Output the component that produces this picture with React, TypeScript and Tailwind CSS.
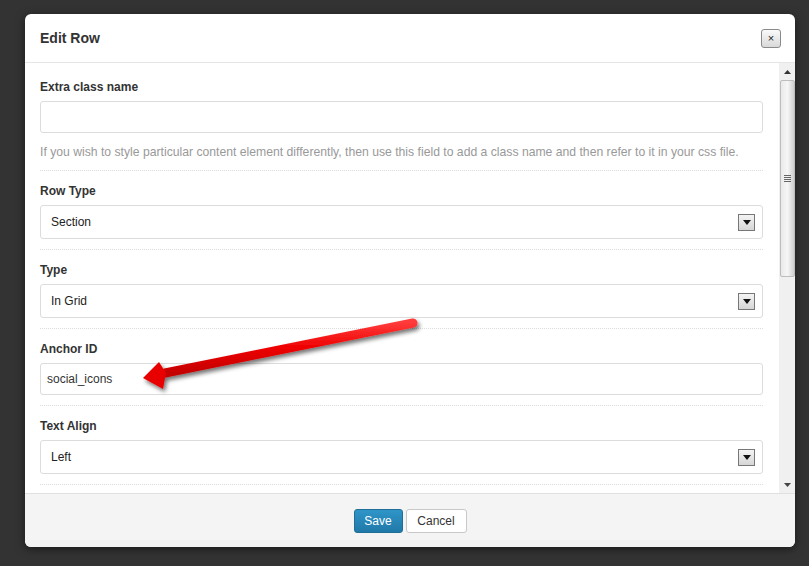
import React from "react";

const font = { fontFamily: '"Liberation Sans", Arial, sans-serif' };

const SelectBox = ({ value }: { value: string }) => (
  <div className="flex h-[34px] items-center justify-between rounded-[3px] border border-[#dcdcdc] bg-white pl-[10px] pr-[7px] text-[12px] text-[#222]">
    <span>{value}</span>
    <span className="flex h-[17px] w-[17px] items-center justify-center border border-[#777] bg-gradient-to-b from-[#f4f4f4] to-[#d6d6d6]">
      <svg width="8" height="5" viewBox="0 0 8 5">
        <path d="M0 0 H8 L4 5 Z" fill="#111" />
      </svg>
    </span>
  </div>
);

const TextBox = ({ value }: { value?: string }) => (
  <div className="flex h-[32px] items-center rounded-[3px] border border-[#dcdcdc] bg-white px-[6px] text-[12px] text-[#333]">
    {value}
  </div>
);

const Field = ({
  label,
  first,
  children,
}: {
  label: string;
  first?: boolean;
  children: React.ReactNode;
}) => (
  <div
    className={`border-b border-dotted border-[#dcdcdc] pb-[10px] ${first ? "pt-[16px]" : "pt-[12px]"}`}
  >
    <div className="mb-[6px] h-[16px] text-[12px] font-bold leading-[16px] text-[#333]">{label}</div>
    {children}
  </div>
);

export default function App() {
  return (
    <div className="relative h-[566px] w-[809px] overflow-hidden bg-[#333]" style={font}>
      <div className="pl-[25px] pt-[14px]">
        <div className="flex h-[533px] w-[770px] flex-col overflow-hidden rounded-[6px] bg-white shadow-[0_2px_10px_rgba(0,0,0,0.5)]">
          <div className="flex h-[49px] shrink-0 items-center justify-between border-b border-[#e5e5e5] pl-[15px] pr-[14px]">
            <h3 className="text-[14px] font-bold text-[#333]">Edit Row</h3>
            <button className="flex h-[19px] w-[20px] items-center justify-center rounded-[3px] border border-[#8a8a8a] bg-gradient-to-b from-[#fafafa] to-[#d9d9d9] text-[11px] leading-none text-[#222]">
              ×
            </button>
          </div>

          <div className="flex h-[430px] shrink-0">
            <div className="flex-1 pl-[15px] pr-[16px]">
              <Field label="Extra class name" first>
                <TextBox />
                <p className="mt-[11px] h-[16px] text-[12.2px] leading-[16px] text-[#999]">
                  If you wish to style particular content element differently, then use this field to add a class name and then refer to it in your css file.
                </p>
              </Field>
              <Field label="Row Type">
                <SelectBox value="Section" />
              </Field>
              <Field label="Type">
                <SelectBox value="In Grid" />
              </Field>
              <Field label="Anchor ID">
                <TextBox value="social_icons" />
              </Field>
              <Field label="Text Align">
                <SelectBox value="Left" />
              </Field>
            </div>
            <div className="flex w-[16px] flex-col items-center bg-[#f0f0f0]">
              <div className="flex h-[17px] w-full items-center justify-center">
                <svg width="7" height="4" viewBox="0 0 7 4">
                  <path d="M0 4 H7 L3.5 0 Z" fill="#333" />
                </svg>
              </div>
              <div className="flex h-[197px] w-[15px] items-center justify-center rounded-[2px] border border-[#bdbdbd] bg-gradient-to-r from-[#e9e9e9] via-[#f6f6f6] to-[#cfcfcf]">
                <div className="flex flex-col gap-[1px]">
                  <div className="h-px w-[7px] bg-[#666]" />
                  <div className="h-px w-[7px] bg-[#666]" />
                  <div className="h-px w-[7px] bg-[#666]" />
                  <div className="h-px w-[7px] bg-[#666]" />
                </div>
              </div>
              <div className="flex-1" />
              <div className="flex h-[17px] w-full items-center justify-center">
                <svg width="7" height="4" viewBox="0 0 7 4">
                  <path d="M0 0 H7 L3.5 4 Z" fill="#444" />
                </svg>
              </div>
            </div>
          </div>

          <div className="flex flex-1 items-center justify-center gap-[3px] border-t border-[#e0e0e0] bg-[#f4f4f4]">
            <button className="h-[24px] w-[49px] rounded-[3px] border border-[#1f6f96] bg-gradient-to-b from-[#2f95c8] to-[#2079a8] text-[12px] text-white">
              Save
            </button>
            <button className="h-[24px] w-[61px] rounded-[3px] border border-[#c8c8c8] bg-white text-[12px] text-[#333]">
              Cancel
            </button>
          </div>
        </div>
      </div>

      <svg className="pointer-events-none absolute left-0 top-0" width="809" height="566">
        <defs>
          <filter id="sh" x="-10%" y="-50%" width="120%" height="200%">
            <feDropShadow dx="2" dy="3" stdDeviation="2" floodColor="#000" floodOpacity="0.55" />
          </filter>
          <linearGradient id="rg" x1="0" y1="0" x2="0" y2="1">
            <stop offset="0" stopColor="#ff3a3a" />
            <stop offset="0.5" stopColor="#ee0000" />
            <stop offset="1" stopColor="#c40000" />
          </linearGradient>
        </defs>
        <g filter="url(#sh)">
          <line x1="413" y1="323" x2="165" y2="373" stroke="url(#rg)" strokeWidth="9" strokeLinecap="round" />
          <path d="M143 378 L159 362 L166 373 L163 389 Z" fill="#e80000" />
        </g>
      </svg>
    </div>
  );
}
